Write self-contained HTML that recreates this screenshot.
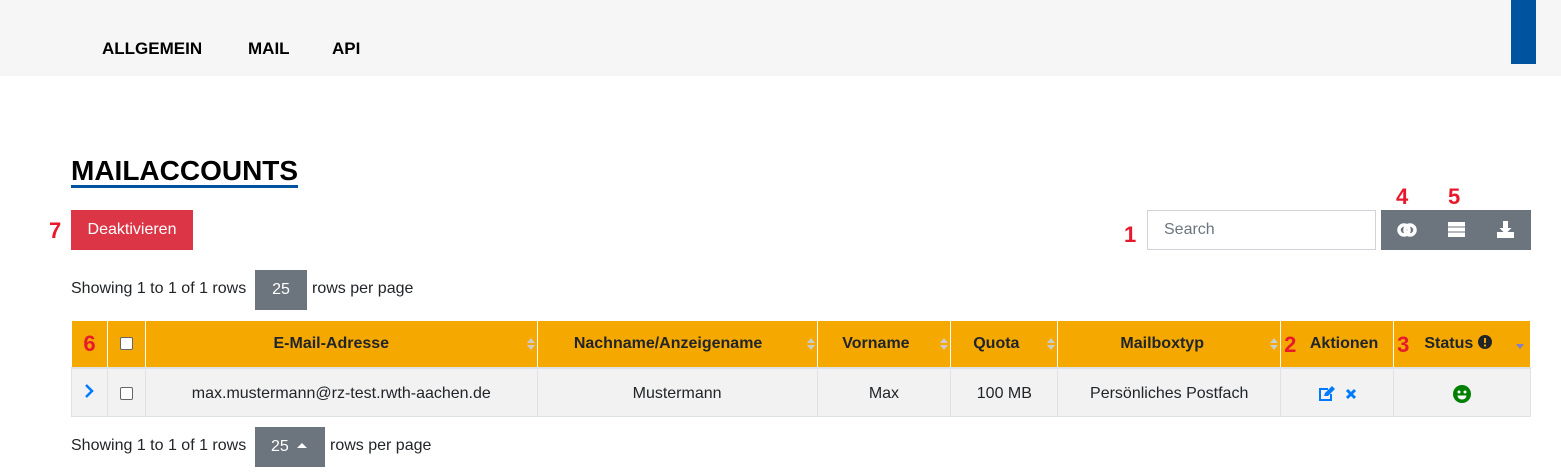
<!DOCTYPE html>
<html><head><meta charset="utf-8">
<style>
*{margin:0;padding:0;box-sizing:border-box}
body{width:1561px;height:473px;background:#fff;font-family:"Liberation Sans",Arial,sans-serif;position:relative;overflow:hidden;color:#212529}
.abs{position:absolute}
.nav{left:0;top:0;width:1561px;height:76px;background:#f6f6f6}
.nav a{position:absolute;top:39px;font-size:17px;font-weight:bold;color:#000;text-decoration:none}
.red{color:#e8192c;font-weight:bold;font-size:22px}
.btn{background:#6c757d}
.t{font-size:16px}
table{position:absolute;left:71px;top:320px;border-collapse:collapse;width:1460px}
th,td{border:1px solid #dee2e6;text-align:center;font-size:16px;position:relative}
th{background:#f5a800;height:47px;font-weight:bold;color:#212529;border-color:#fff;border-bottom:2px solid #dee2e6}
td{background:#f2f2f2;height:49px;padding-top:3px}
.s{position:absolute;right:6px;top:17px;width:0;height:0}
.s:before{content:"";position:absolute;left:-4px;top:0;border:4px solid transparent;border-bottom:5px solid #ccc;border-top:none}
.s:after{content:"";position:absolute;left:-4px;top:7px;border:4px solid transparent;border-top:5px solid #ccc;border-bottom:none}
.cb{display:inline-block;width:13px;height:13px;border:1px solid #666;border-radius:2px;background:#fff;vertical-align:middle}
</style></head><body>
<div class="abs nav">
<a style="left:102px">ALLGEMEIN</a><a style="left:248px">MAIL</a><a style="left:332px">API</a>
<div class="abs" style="left:1511px;top:0;width:25px;height:64px;background:#00549f"></div>
</div>
<div class="abs" style="left:71px;top:156px;font-size:28px;font-weight:bold;color:#000;border-bottom:3px solid #00549f;line-height:29px">MAILACCOUNTS</div>
<div class="abs red" style="left:49px;top:218px">7</div>
<div class="abs" style="left:71px;top:210px;width:122px;height:40px;background:#dc3545;color:#fff;font-size:16px;line-height:40px;text-align:center">Deaktivieren</div>
<div class="abs red" style="left:1124px;top:222px">1</div>
<div class="abs" style="left:1147px;top:210px;width:229px;height:40px;border:1px solid #ced4da;font-size:16px;color:#6c757d;padding:10px 0 0 16px">Search</div>
<div class="abs red" style="left:1396px;top:184px">4</div>
<div class="abs red" style="left:1448px;top:184px">5</div>
<div class="abs btn" style="left:1381px;top:210px;width:150px;height:40px">
<svg class="abs" style="left:16px;top:13px" width="20" height="14" viewBox="0 0 20 14"><circle cx="7" cy="7" r="5" fill="none" stroke="#fff" stroke-width="3.5"/><circle cx="13" cy="7" r="5" fill="none" stroke="#fff" stroke-width="3.5"/></svg>
<svg class="abs" style="left:67px;top:12px" width="17" height="15" viewBox="0 0 17 15" fill="#fff"><rect x="0" y="0" width="17" height="4.5"/><rect x="0" y="5.5" width="17" height="4"/><rect x="0" y="10.5" width="17" height="4.5"/></svg>
<svg class="abs" style="left:116px;top:11px" width="17" height="17" viewBox="0 0 17 17" fill="#fff"><rect x="6" y="0" width="5" height="7"/><polygon points="2.5,7 14.5,7 8.5,13"/><rect x="0" y="11" width="17" height="6"/></svg>
</div>
<div class="abs t" style="left:71px;top:280px">Showing 1 to 1 of 1 rows</div>
<div class="abs btn" style="left:255px;top:270px;width:52px;height:40px;color:#fff;font-size:16px;line-height:40px;text-align:center">25</div>
<div class="abs t" style="left:312px;top:280px">rows per page</div>
<table>
<tr>
<th style="width:36px"><span class="red">6</span></th>
<th style="width:38px"><span class="cb"></span></th>
<th style="width:392px"><span style="margin-left:-20px">E-Mail-Adresse</span><span class="s"></span></th>
<th style="width:280px"><span style="margin-left:-18px">Nachname/Anzeigename</span><span class="s"></span></th>
<th style="width:134px"><span style="margin-left:-16px">Vorname</span><span class="s"></span></th>
<th style="width:107px"><span style="margin-left:-16px">Quota</span><span class="s"></span></th>
<th style="width:223px"><span style="margin-left:-14px">Mailboxtyp</span><span class="s"></span></th>
<th style="width:113px"><span class="red" style="position:absolute;left:3px;top:11px">2</span><span style="margin-left:14px">Aktionen</span></th>
<th style="width:137px"><span class="red" style="position:absolute;left:3px;top:11px">3</span><span style="margin-left:-8px">Status</span> <svg width="14" height="14" viewBox="0 0 14 14" style="vertical-align:-1px"><circle cx="7" cy="7" r="7" fill="#212529"/><rect x="6" y="3" width="2" height="5" fill="#f5a800"/><rect x="6" y="9.5" width="2" height="2" fill="#f5a800"/></svg><span style="position:absolute;right:6px;top:23px;border:4px solid transparent;border-top:5px solid #7f7fcf;border-bottom:none"></span></th>
</tr>
<tr>
<td><svg width="10" height="14" viewBox="0 0 10 14"><polyline points="2,1 8,7 2,13" fill="none" stroke="#007bff" stroke-width="2.5"/></svg></td>
<td><span class="cb"></span></td>
<td>max.mustermann@rz-test.rwth-aachen.de</td>
<td>Mustermann</td>
<td>Max</td>
<td>100 MB</td>
<td>Persönliches Postfach</td>
<td><svg width="18" height="16" viewBox="0 0 18 16" style="vertical-align:middle"><path d="M10 3H2v11h11V8" fill="none" stroke="#007bff" stroke-width="2"/><path d="M6 10l1-3 7-7 3 3-7 7z" fill="#007bff"/></svg>&nbsp;&nbsp;<svg width="12" height="12" viewBox="0 0 12 12" style="vertical-align:middle"><path d="M2 2l8 8M10 2l-8 8" stroke="#007bff" stroke-width="3"/></svg></td>
<td><svg width="18" height="18" viewBox="0 0 18 18" style="vertical-align:middle"><circle cx="9" cy="9" r="9" fill="#008000"/><circle cx="6" cy="7" r="1.5" fill="#fff"/><circle cx="12" cy="7" r="1.5" fill="#fff"/><path d="M4.5 10.5h9a4.5 4 0 0 1-9 0z" fill="#fff"/></svg></td>
</tr>
</table>
<div class="abs t" style="left:71px;top:437px">Showing 1 to 1 of 1 rows</div>
<div class="abs btn" style="left:255px;top:427px;width:70px;height:40px;color:#fff;font-size:16px;line-height:40px;padding-left:16px">25 <span style="display:inline-block;border:5px solid transparent;border-bottom:5px solid #fff;border-top:none;vertical-align:3px;margin-left:4px"></span></div>
<div class="abs t" style="left:330px;top:437px">rows per page</div>
</body></html>
